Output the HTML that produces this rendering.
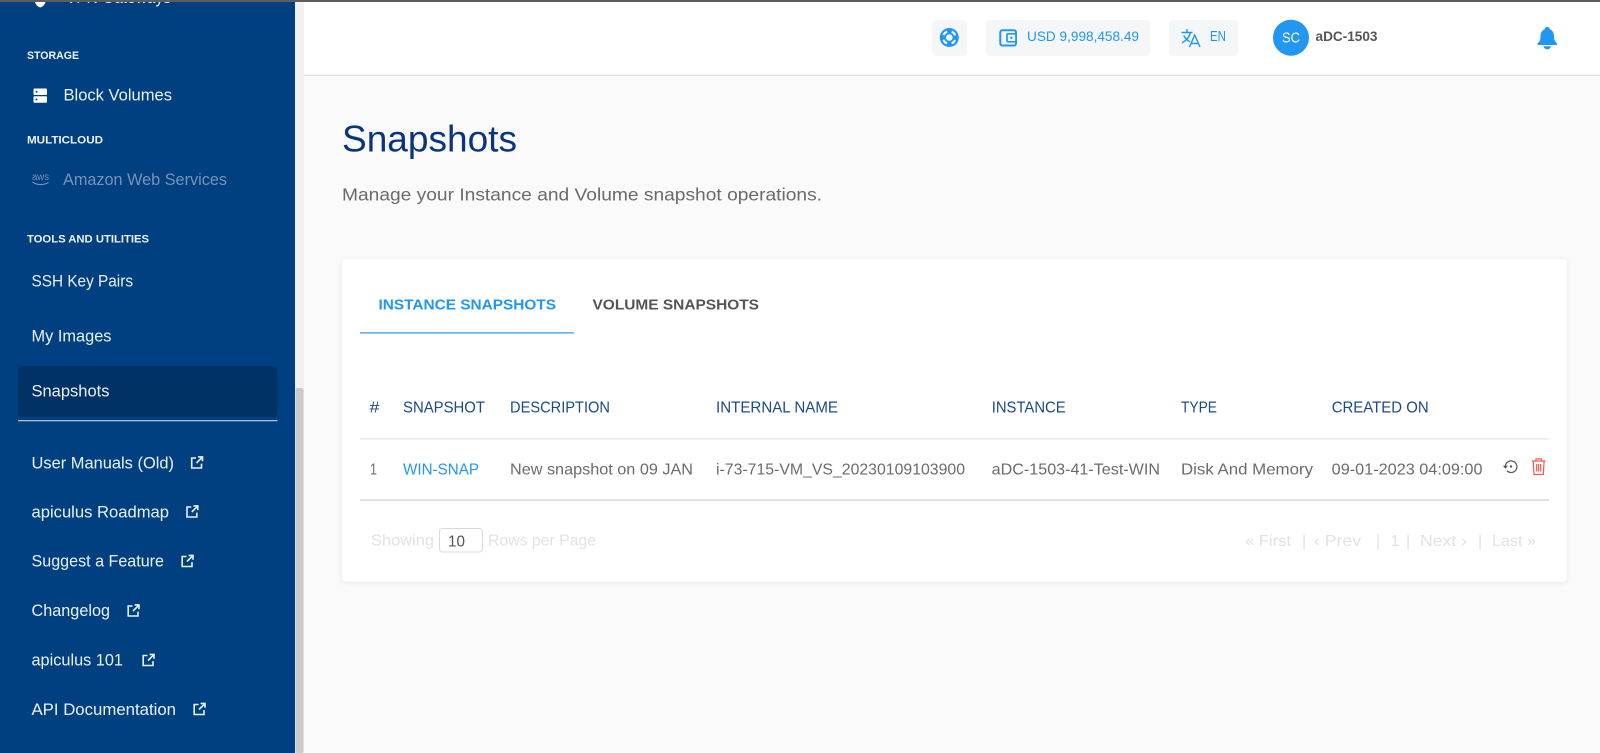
<!DOCTYPE html>
<html><head><meta charset="utf-8"><title>Snapshots</title>
<style>
html,body{margin:0;padding:0;width:1600px;height:753px;overflow:hidden;background:#fafafa}
svg{display:block}
text{font-family:"Liberation Sans",Arial,sans-serif}
.s{font-size:16.6px;fill:#eaf0f6}
.c{font-size:11px;font-weight:700;fill:#eef2f7}
.h{font-size:15.6px;fill:#1b4a86}
.r{font-size:15.6px;fill:#6b6b6b}
.p{font-size:16px;fill:#e2e2e2}
.x{fill:none;stroke:#eaf0f6;stroke-width:1.6}
</style></head><body>
<svg xmlns="http://www.w3.org/2000/svg" width="1600" height="753" viewBox="0 0 1600 753">
<defs>
<filter id="sh" x="-5%" y="-10%" width="110%" height="120%"><feDropShadow dx="0" dy="1" stdDeviation="3" flood-color="#000" flood-opacity=".08"/></filter>
<g id="ext"><path class="x" d="M5.5 2H1.2V12H11V7.6"/><path class="x" d="M6 7L11.7 1.3M7.6 .9H12V5.3"/></g>
</defs>
<rect width="1600" height="753" fill="#fafafa"/>
<!-- topbar -->
<rect x="304" y="0" width="1296" height="75" fill="#fff"/>
<rect x="304" y="74.5" width="1296" height="1.5" fill="#e2e2e2"/>
<!-- sidebar -->
<rect width="295" height="753" fill="#004080"/>
<rect x="295" width="9" height="753" fill="#f1f1f1"/>
<rect x="295.500" y="388" width="8" height="365" rx="2" fill="#cbcbcb"/>
<path d="M35 2H45.500C45 5 42 7 40.200 7.500 38.500 7 35.500 5 35 2Z" fill="#fff"/>
<text class="s" x="66" y="3" textLength="105" lengthAdjust="spacingAndGlyphs">VPN Gateways</text>
<rect width="1600" height="2" fill="#5d5d5d"/>
<text class="c" x="27" y="59" textLength="52" lengthAdjust="spacingAndGlyphs">STORAGE</text>
<rect x="33.500" y="88.500" width="13.500" height="6.500" rx="1" fill="#fff"/><rect x="33.500" y="96.300" width="13.500" height="6.500" rx="1" fill="#fff"/>
<circle cx="36.500" cy="91.700" r="1" fill="#004080"/><circle cx="36.500" cy="99.500" r="1" fill="#004080"/>
<text class="s" x="63.500" y="100.300" textLength="108.500" lengthAdjust="spacingAndGlyphs">Block Volumes</text>
<text class="c" x="27" y="143.500" textLength="76" lengthAdjust="spacingAndGlyphs">MULTICLOUD</text>
<text x="32" y="180" font-size="10.500" fill="#7693b6" textLength="17" lengthAdjust="spacingAndGlyphs">aws</text>
<path d="M32.500 182.200C37 185.300 44 185.300 48.500 182.400" fill="none" stroke="#7693b6" stroke-width="1.100"/>
<text class="s" x="63" y="185.200" textLength="164" lengthAdjust="spacingAndGlyphs" style="fill:#7693b6">Amazon Web Services</text>
<text class="c" x="27" y="242.700" textLength="122" lengthAdjust="spacingAndGlyphs">TOOLS AND UTILITIES</text>
<text class="s" x="31.500" y="286.300" textLength="101.500" lengthAdjust="spacingAndGlyphs">SSH Key Pairs</text>
<text class="s" x="31.500" y="341.300" textLength="80" lengthAdjust="spacingAndGlyphs">My Images</text>
<rect x="18" y="366" width="259.500" height="51" rx="4" fill="#003265"/>
<text class="s" x="31.500" y="396.300" textLength="78" lengthAdjust="spacingAndGlyphs">Snapshots</text>
<rect x="18" y="420" width="259.500" height="1.300" fill="#aebccd"/>
<text class="s" x="31.500" y="468.300" textLength="142.500" lengthAdjust="spacingAndGlyphs">User Manuals (Old)</text><use href="#ext" x="190.500" y="456"/>
<text class="s" x="31.500" y="517.300" textLength="137.500" lengthAdjust="spacingAndGlyphs">apiculus Roadmap</text><use href="#ext" x="185.800" y="505"/>
<text class="s" x="31.500" y="566.300" textLength="132.500" lengthAdjust="spacingAndGlyphs">Suggest a Feature</text><use href="#ext" x="181" y="554.500"/>
<text class="s" x="31.500" y="616" textLength="78.500" lengthAdjust="spacingAndGlyphs">Changelog</text><use href="#ext" x="127" y="604"/>
<text class="s" x="31.500" y="665.500" textLength="91.500" lengthAdjust="spacingAndGlyphs">apiculus 101</text><use href="#ext" x="142" y="653.500"/>
<text class="s" x="31.500" y="715" textLength="144.500" lengthAdjust="spacingAndGlyphs">API Documentation</text><use href="#ext" x="193" y="702.500"/>
<!-- header widgets -->
<rect x="932" y="20" width="35" height="36" rx="4" fill="#f5f6f8"/>
<circle cx="949.300" cy="37.500" r="9.500" fill="#2196f3"/><circle cx="949.300" cy="37.500" r="6.300" fill="none" stroke="#f5f6f8" stroke-width="2.200" stroke-dasharray="5.200 4.700" stroke-dashoffset="2.600" transform="rotate(45 949.300 37.500)"/><circle cx="949.300" cy="37.500" r="3.300" fill="#f5f6f8"/>
<rect x="986" y="20" width="164" height="36" rx="4" fill="#f5f6f8"/>
<rect x="1000.300" y="30.200" width="15.700" height="15.300" rx="2" fill="none" stroke="#2196f3" stroke-width="2"/><rect x="1007" y="33.800" width="9" height="8" rx="1" fill="#f5f6f8" stroke="#2196f3" stroke-width="1.700"/><circle cx="1011.300" cy="37.800" r="1.200" fill="#2196f3"/>
<text x="1027" y="40.800" font-size="14" fill="#2196f3" textLength="112" lengthAdjust="spacingAndGlyphs">USD 9,998,458.49</text>
<rect x="1169" y="20" width="69" height="36" rx="4" fill="#f5f6f8"/>
<path d="M1181.500 32.500H1192.500M1187 29V32.500M1190.500 32.500C1189 37.500 1186 41 1182 42.800M1183.700 35.500C1185.300 38.500 1187.500 40.500 1190 41.700" fill="none" stroke="#2196f3" stroke-width="1.400"/><path d="M1189.500 47L1194.700 35 1200 47M1191.200 43.500H1198.300" fill="none" stroke="#2196f3" stroke-width="1.400"/>
<text x="1210" y="41" font-size="14.500" fill="#2196f3" textLength="16" lengthAdjust="spacingAndGlyphs">EN</text>
<circle cx="1291" cy="37.700" r="18" fill="#2196f3"/>
<text x="1282" y="42.300" font-size="14.500" fill="#fff" textLength="18" lengthAdjust="spacingAndGlyphs">SC</text>
<text x="1315.500" y="41" font-size="13.500" font-weight="700" fill="#555" textLength="62" lengthAdjust="spacingAndGlyphs">aDC-1503</text>
<path d="M1547.200 27C1549 27 1549.800 28.200 1549.800 29.300C1552.800 30.400 1554 33 1554 36.500C1554 40 1555 41.500 1557 43.500V45H1537.500V43.500C1539.500 41.500 1540.500 40 1540.500 36.500C1540.500 33 1541.700 30.400 1544.700 29.300C1544.700 28.200 1545.500 27 1547.200 27Z" fill="#2196f3"/><path d="M1543.500 46.200H1551C1550.500 48.200 1549 49.200 1547.200 49.200S1544 48.200 1543.500 46.200Z" fill="#2196f3"/>
<!-- heading -->
<text x="342" y="151.700" font-size="37" fill="#0a3480" textLength="175" lengthAdjust="spacingAndGlyphs">Snapshots</text>
<text x="342" y="200.300" font-size="17.800" fill="#6a6a6a" textLength="480" lengthAdjust="spacingAndGlyphs">Manage your Instance and Volume snapshot operations.</text>
<!-- card -->
<rect x="342" y="259" width="1224.700" height="322.700" rx="4" fill="#fff" filter="url(#sh)"/>
<text x="378.500" y="309.300" font-size="15.200" font-weight="700" fill="#2196f3" textLength="177.500" lengthAdjust="spacingAndGlyphs">INSTANCE SNAPSHOTS</text>
<text x="592.500" y="309.300" font-size="15.200" font-weight="700" fill="#555" textLength="166.500" lengthAdjust="spacingAndGlyphs">VOLUME SNAPSHOTS</text>
<rect x="360" y="332.300" width="214" height="1.200" fill="#2196f3"/>
<!-- table -->
<text class="h" x="369.500" y="412.700" textLength="10" lengthAdjust="spacingAndGlyphs">#</text>
<text class="h" x="403" y="412.700" textLength="82" lengthAdjust="spacingAndGlyphs">SNAPSHOT</text>
<text class="h" x="510" y="412.700" textLength="100" lengthAdjust="spacingAndGlyphs">DESCRIPTION</text>
<text class="h" x="716" y="412.700" textLength="122" lengthAdjust="spacingAndGlyphs">INTERNAL NAME</text>
<text class="h" x="991.700" y="412.700" textLength="74" lengthAdjust="spacingAndGlyphs">INSTANCE</text>
<text class="h" x="1181" y="412.700" textLength="36" lengthAdjust="spacingAndGlyphs">TYPE</text>
<text class="h" x="1331.700" y="412.700" textLength="97" lengthAdjust="spacingAndGlyphs">CREATED ON</text>
<rect x="360" y="438.300" width="1189" height="1.200" fill="#dfe3e9"/>
<text class="r" x="370" y="474.500" textLength="7" lengthAdjust="spacingAndGlyphs">1</text>
<text class="r" x="403" y="474.500" textLength="76" lengthAdjust="spacingAndGlyphs" style="fill:#2196f3">WIN-SNAP</text>
<text class="r" x="510" y="474.500" textLength="183" lengthAdjust="spacingAndGlyphs">New snapshot on 09 JAN</text>
<text class="r" x="716" y="474.500" textLength="249" lengthAdjust="spacingAndGlyphs">i-73-715-VM_VS_20230109103900</text>
<text class="r" x="991.700" y="474.500" textLength="168.300" lengthAdjust="spacingAndGlyphs">aDC-1503-41-Test-WIN</text>
<text class="r" x="1181" y="474.500" textLength="132" lengthAdjust="spacingAndGlyphs">Disk And Memory</text>
<text class="r" x="1331.700" y="474.500" textLength="150.800" lengthAdjust="spacingAndGlyphs">09-01-2023 04:09:00</text>
<path d="M1505.300 466.500A5.800 5.800 0 1 1 1507 470.800" fill="none" stroke="#555" stroke-width="1.200"/><path d="M1502.800 465.800H1508L1505.400 468.800Z" fill="#555"/><circle cx="1511" cy="466.500" r="1.200" fill="#555"/>
<g fill="none" stroke="#f4594c" stroke-width="1.200"><path d="M1531.800 461H1545.500M1536 461V458.800H1541.300V461M1533.200 461L1534 474.500H1543.300L1544.100 461"/><path d="M1536.700 464V471.500M1538.700 464V471.500M1540.700 464V471.500"/></g>
<rect x="360" y="499.300" width="1189" height="1.700" fill="#dcdcdc"/>
<!-- pagination -->
<text class="p" x="371" y="545.500" textLength="63" lengthAdjust="spacingAndGlyphs">Showing</text>
<rect x="439.500" y="528.500" width="43" height="23.500" rx="3" fill="#fff" stroke="#d5dbe3"/>
<text x="448" y="546.500" font-size="16" fill="#555" textLength="17" lengthAdjust="spacingAndGlyphs">10</text>
<text class="p" x="488" y="545.500" textLength="108" lengthAdjust="spacingAndGlyphs">Rows per Page</text>
<text class="p" x="1245" y="546" textLength="46" lengthAdjust="spacingAndGlyphs">« First</text>
<text class="p" x="1302" y="546">|</text>
<text class="p" x="1314" y="546" textLength="47" lengthAdjust="spacingAndGlyphs">‹ Prev</text>
<text class="p" x="1376" y="546">|</text>
<text class="p" x="1390.500" y="546">1</text>
<text class="p" x="1406" y="546">|</text>
<text class="p" x="1420" y="546" textLength="47" lengthAdjust="spacingAndGlyphs">Next ›</text>
<text class="p" x="1478" y="546">|</text>
<text class="p" x="1492" y="546" textLength="44" lengthAdjust="spacingAndGlyphs">Last »</text>
</svg>
</body></html>
